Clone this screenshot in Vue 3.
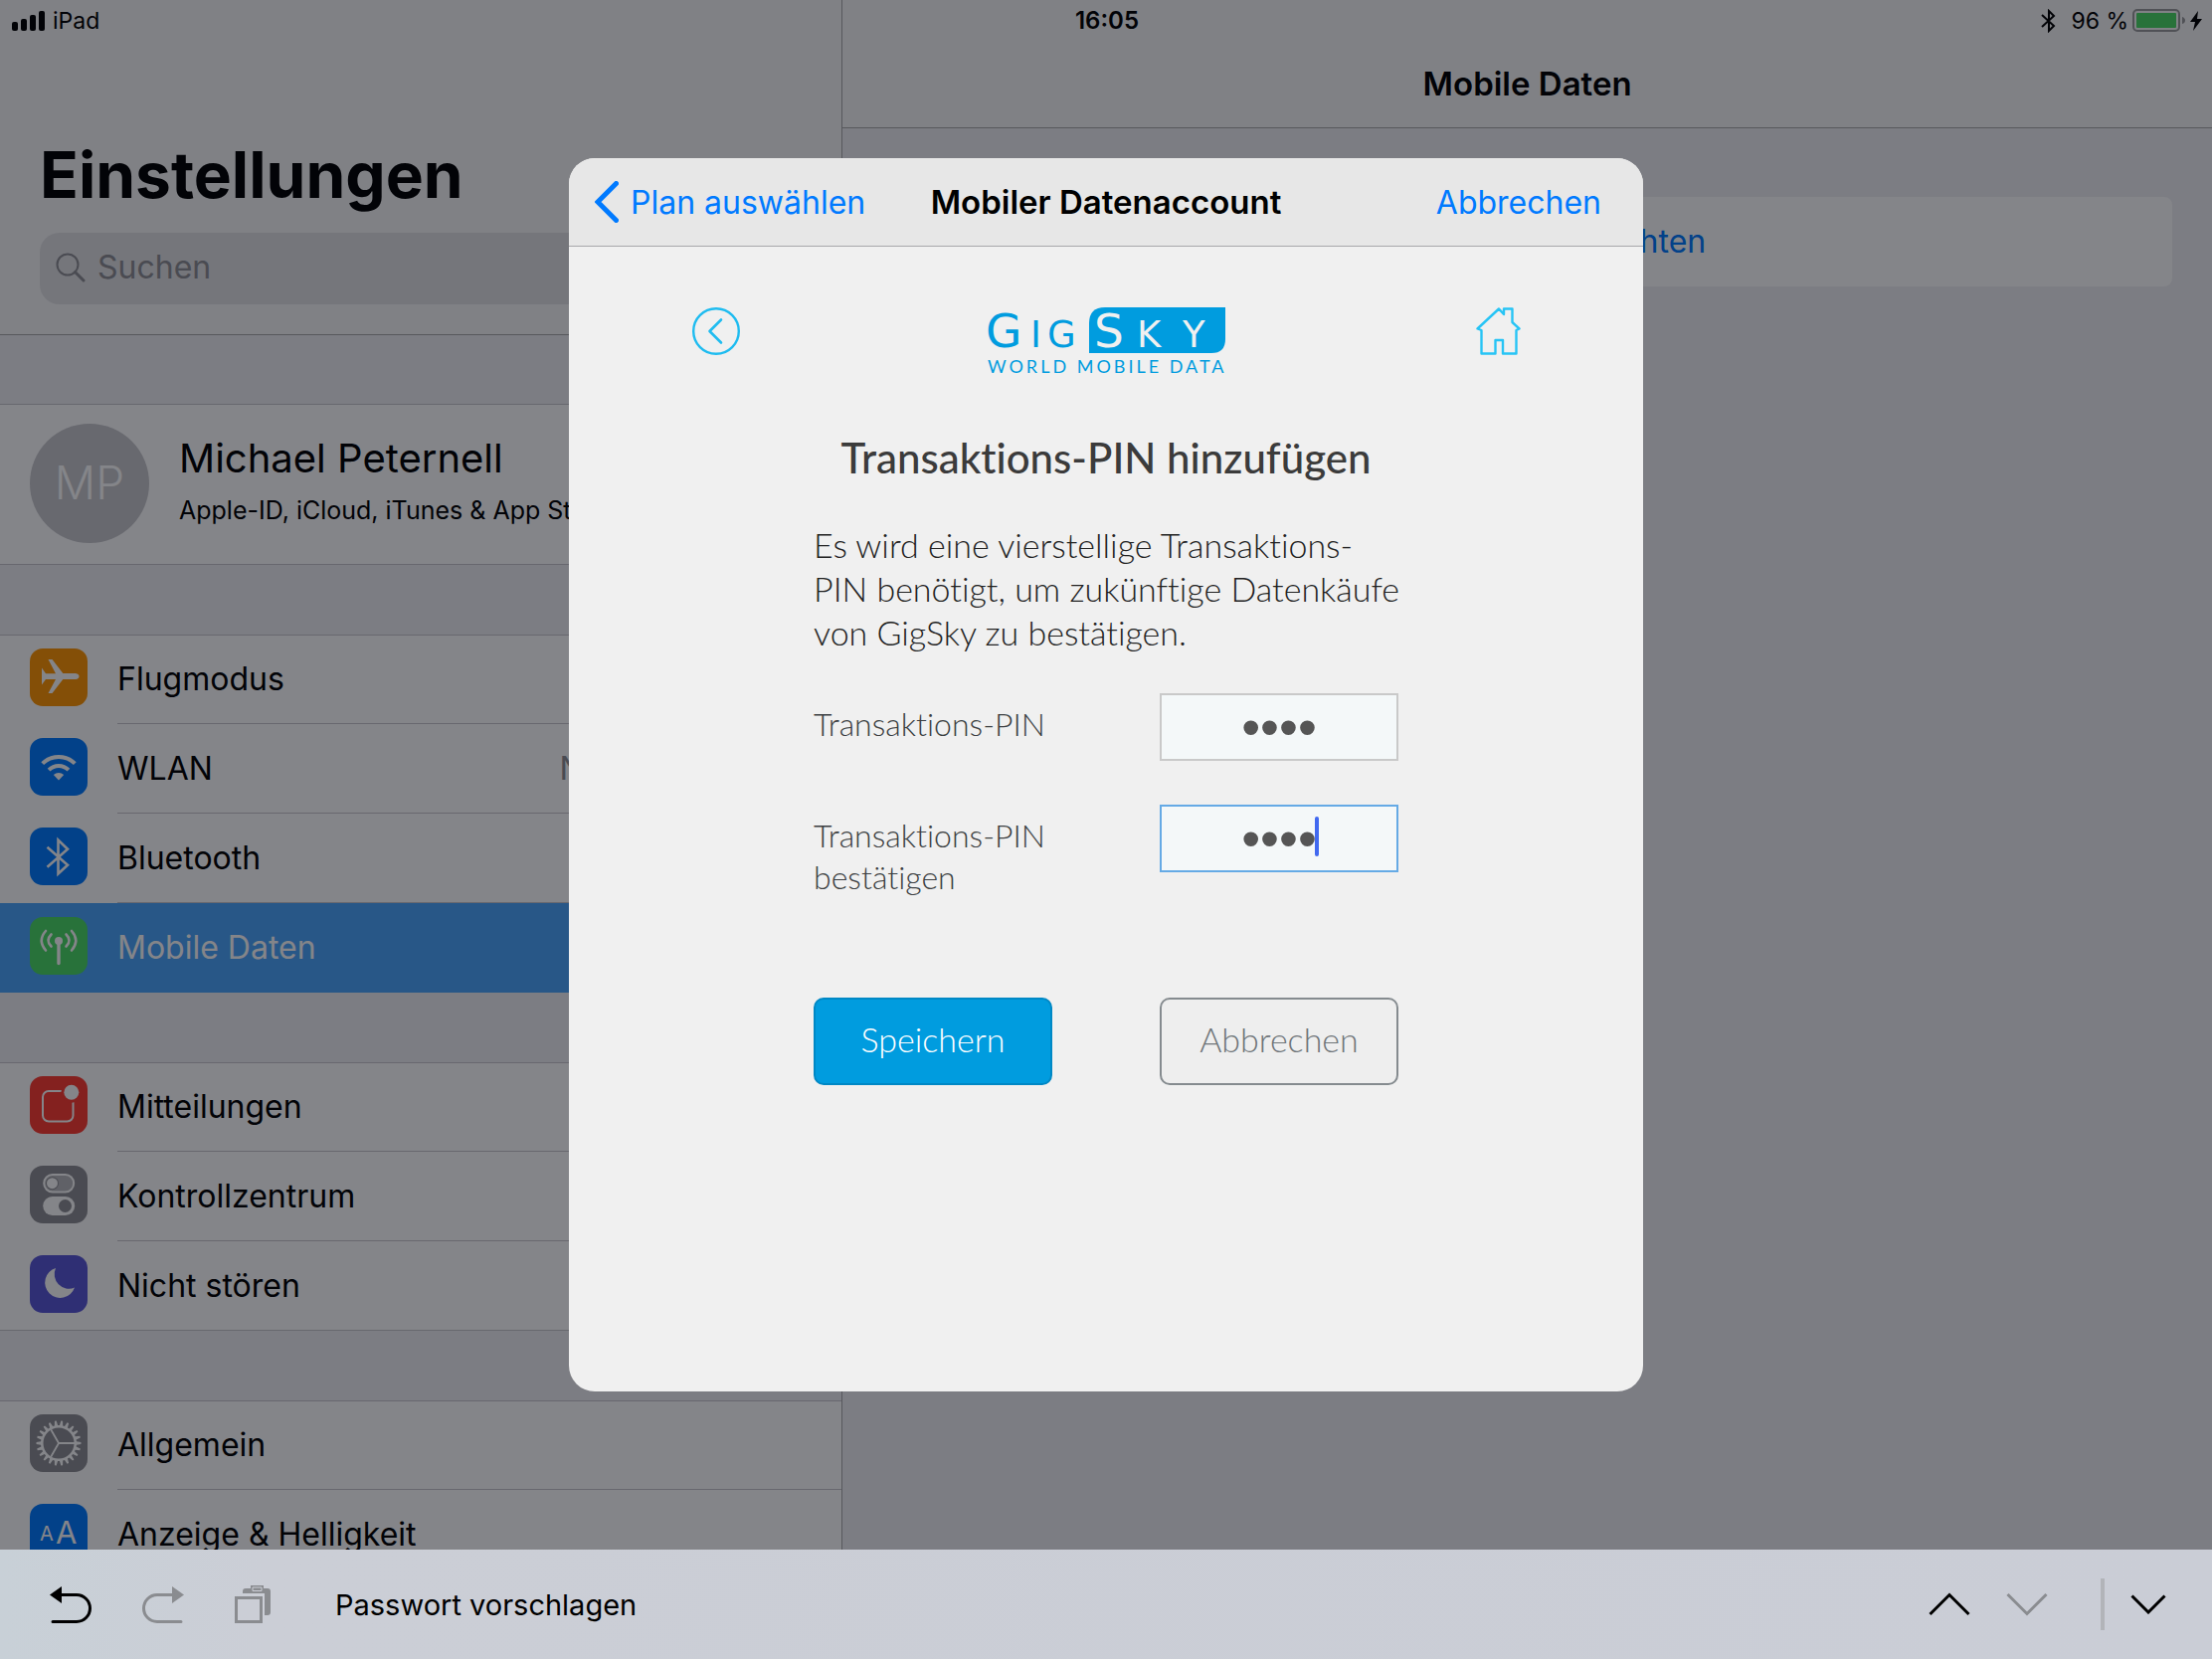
<template>
  <div class="screen">
    <div class="status-bar">
      <div class="status-left">
        <svg width="33" height="20" viewBox="0 0 33 20" aria-hidden="true">
          <rect x="0" y="11" width="6" height="9" rx="2" />
          <rect x="9" y="8" width="6" height="12" rx="2" />
          <rect x="18" y="4" width="6" height="16" rx="2" />
          <rect x="27" y="0" width="6" height="20" rx="2" />
        </svg>
        <span>iPad</span>
      </div>
      <div class="status-time">16:05</div>
      <div class="status-right">
        <svg width="16" height="24" viewBox="0 0 16 24" aria-hidden="true">
          <path d="M1 6 L13 17 L8 22 V2 L13 7 L1 18" fill="none" stroke="#000" stroke-width="2" />
        </svg>
        <span class="percent">96 %</span>
        <svg width="54" height="23" viewBox="0 0 54 23" aria-hidden="true">
          <rect x="1" y="1" width="46" height="21" rx="4" fill="none" stroke="#9a9a9c" stroke-width="2" />
          <rect x="4" y="4" width="40" height="15" rx="1" fill="#4cd964" />
          <path d="M50 8 Q53 9 53 11.5 Q53 14 50 15 Z" fill="#9a9a9c" />
        </svg>
        <svg width="12" height="20" viewBox="0 0 12 20" aria-hidden="true">
          <path d="M8 0 L0 11 H5 L3 20 L12 8 H7 Z" />
        </svg>
      </div>
    </div>

    <main class="content">
      <aside class="sidebar">
        <header class="sidebar-header">
          <h1>Einstellungen</h1>
          <div class="search">
            <svg width="30" height="30" viewBox="0 0 30 30" aria-hidden="true">
              <circle cx="12" cy="12" r="10.5" fill="none" stroke="#8e8e93" stroke-width="2" />
              <path d="M19.5 19.5 L28 28" stroke="#8e8e93" stroke-width="3" stroke-linecap="round" />
            </svg>
            <input v-model="search" type="search" placeholder="Suchen" aria-label="Suchen" />
          </div>
        </header>

        <section class="group profile">
          <div class="avatar">MP</div>
          <div>
            <div class="profile-name">Michael Peternell</div>
            <div class="profile-sub">Apple-ID, iCloud, iTunes &amp; App Store</div>
          </div>
        </section>

        <nav v-for="(group, index) in groups" :key="index" class="group">
          <a
            v-for="item in group"
            :key="item.icon"
            href="#"
            class="row"
            :class="{ active: item.icon === selected }"
            @click.prevent="selected = item.icon"
          >
            <svg class="row-icon" :class="item.icon" viewBox="0 0 58 58" aria-hidden="true">
              <path
                v-if="item.icon === 'flight'"
                d="M12 19.5 L16 25.3 H26 L18.5 11 H22.5 L33.3 25 H46 Q49.5 25.5 49.5 28 Q49.5 30.5 46 31 H33.3 L22.5 45 H18.5 L26 31 H16 L12 36.5 Z"
                fill="#fff"
              />
              <g v-else-if="item.icon === 'wifi'" fill="none" stroke="#fff" stroke-width="4">
                <path d="M12.7 25.7 A23 23 0 0 1 45.3 25.7" />
                <path d="M19.1 32.1 A14 14 0 0 1 38.9 32.1" />
                <path d="M29 42.5 L23.8 37 A8 8 0 0 1 34.2 37 Z" fill="#fff" stroke="none" />
              </g>
              <path
                v-else-if="item.icon === 'bluetooth'"
                d="M17.5 19.7 L38 37.7 L28.5 46.5 V12.5 L38 21.7 L17.5 39.7"
                fill="none"
                stroke="#fff"
                stroke-width="2.6"
              />
              <g v-else-if="item.icon === 'cellular'" fill="none" stroke="#fff" stroke-width="2.6" stroke-linecap="round">
                <path d="M29 24 V46.5" stroke-width="3.4" />
                <circle cx="29" cy="24" r="4" fill="#fff" stroke="none" />
                <path d="M16 14 Q7.5 23.5 16 33.5 M42 14 Q50.5 23.5 42 33.5" />
                <path d="M21.5 17.5 Q15.5 23.5 21.5 29.5 M36.5 17.5 Q42.5 23.5 36.5 29.5" />
              </g>
              <g v-else-if="item.icon === 'notifications'">
                <rect x="13" y="15" width="30.5" height="30.5" rx="6" fill="none" stroke="#fff" stroke-width="2" />
                <circle cx="41.8" cy="16.3" r="10.5" fill="#ff3b30" />
                <circle cx="41.8" cy="16.3" r="7.5" fill="#fff" />
              </g>
              <g v-else-if="item.icon === 'control'">
                <rect x="14.2" y="9" width="30" height="17.5" rx="8.7" fill="#b9b9bc" stroke="#fff" stroke-width="2" />
                <circle cx="22.5" cy="17.7" r="6.5" fill="#8e8e93" />
                <circle cx="22.5" cy="17.7" r="5.5" fill="#fff" />
                <rect x="13.2" y="31" width="32" height="19" rx="9.5" fill="#fff" />
                <circle cx="35.5" cy="40.5" r="6.5" fill="#8e8e93" />
              </g>
              <path
                v-else-if="item.icon === 'moon'"
                d="M26 13 A15.3 15.3 0 1 0 45 32.5 A14.6 14.6 0 0 1 26 13 Z"
                fill="#fff"
              />
              <g v-else-if="item.icon === 'general'" fill="none" stroke="#fff">
                <path :d="gear" fill="#fff" stroke="none" fill-rule="evenodd" />
                <path d="M29 29 H45 M29 29 L21 15 M29 29 L21 43" stroke-width="1.8" />
              </g>
              <g v-else fill="#fff">
                <text x="10" y="37" font-size="20">A</text>
                <text x="26" y="40" font-size="31">A</text>
              </g>
            </svg>
            <span class="row-body">
              <span>{{ item.label }}</span>
              <span v-if="item.value" class="row-value">{{ item.value }}</span>
            </span>
          </a>
        </nav>
      </aside>

      <section class="detail">
        <header class="detail-header">
          <h2>Mobile Daten</h2>
        </header>
        <button type="button" class="setup">Mobile Daten einrichten</button>
      </section>

      <div class="backdrop">
        <div class="modal" role="dialog" aria-labelledby="modal-title">
          <header class="modal-header">
            <button type="button" class="link back">
              <svg width="24" height="42" viewBox="0 0 24 42" aria-hidden="true">
                <path d="M21.5 2.5 L3 21 L21.5 39.5" fill="none" stroke="#007aff" stroke-width="5" stroke-linecap="round" />
              </svg>
              Plan auswählen
            </button>
            <h2 id="modal-title">Mobiler Datenaccount</h2>
            <button type="button" class="link cancel">Abbrechen</button>
          </header>

          <div class="brand">
            <button type="button" class="icon-button" aria-label="Zurück">
              <svg width="48" height="48" viewBox="0 0 48 48" fill="none" stroke="#1fbcf0" stroke-linecap="round">
                <circle cx="24" cy="24" r="22.8" stroke-width="2.4" />
                <path d="M29 12.5 L17.5 24 L29 35.5" stroke-width="2.6" stroke-linejoin="round" />
              </svg>
            </button>
            <svg class="logo" width="240" height="68" viewBox="0 0 240 68" role="img" aria-label="GigSky World Mobile Data">
              <path d="M102 46 V16 Q102 0 118 0 H239 V32 Q239 46 225 46 Z" fill="#009cdf" />
              <g font-family="DejaVu Sans, sans-serif" fill="#009cdf">
                <text x="-2 43 60" y="40"><tspan font-size="47">G</tspan><tspan font-size="37">IG</tspan></text>
                <text x="107 150 196" y="40" fill="#f0f0f0"><tspan font-size="47">S</tspan><tspan font-size="37">KY</tspan></text>
              </g>
              <text class="tagline" x="0" y="66">WORLD MOBILE DATA</text>
            </svg>
            <button type="button" class="icon-button" aria-label="Startseite">
              <svg width="48" height="48" viewBox="0 0 48 48">
                <path
                  d="M25 1.5 L30 7 V1.5 H38.5 V15 L45.5 21.5 L42.5 23 V46.5 H29 V33 H21.5 V46.5 H7.5 V23 L3.5 21.5 Z"
                  fill="none"
                  stroke="#27c4f5"
                  stroke-width="2.4"
                  stroke-linejoin="round"
                />
              </svg>
            </button>
          </div>

          <form class="pin-form" @submit.prevent>
            <h3>Transaktions-PIN hinzufügen</h3>
            <p>
              Es wird eine vierstellige Transaktions-<br />PIN benötigt, um zukünftige Datenkäufe<br />
              von GigSky zu bestätigen.
            </p>

            <div class="field">
              <label for="pin">Transaktions-PIN</label>
              <div class="pin-box">
                <input id="pin" v-model="pin" type="password" maxlength="4" />
              </div>
            </div>
            <div class="field">
              <label for="pin-confirm">Transaktions-PIN bestätigen</label>
              <div class="pin-box">
                <input id="pin-confirm" v-model="pinConfirm" class="focused" type="password" maxlength="4" />
                <span class="caret"></span>
              </div>
            </div>

            <div class="actions">
              <button type="submit" class="primary">Speichern</button>
              <button type="button" class="secondary">Abbrechen</button>
            </div>
          </form>
        </div>
      </div>
    </main>

    <footer class="keyboard-bar">
      <button type="button" aria-label="Widerrufen">
        <svg width="42" height="38" viewBox="0 0 42 38">
          <path d="M0 9.5 L12 1 V18 Z" />
          <path d="M11 9.5 H27 A13.5 13.5 0 0 1 27 36.5 H3" fill="none" stroke="#000" stroke-width="3" stroke-linecap="round" />
        </svg>
      </button>
      <button type="button" aria-label="Wiederholen">
        <svg width="42" height="38" viewBox="0 0 42 38">
          <path d="M42 9.5 L30 1 V18 Z" fill="#8a8c90" />
          <path d="M31 9.5 H15 A13.5 13.5 0 0 0 15 36.5 H39" fill="none" stroke="#8a8c90" stroke-width="3" stroke-linecap="round" />
        </svg>
      </button>
      <button type="button" aria-label="Einsetzen">
        <svg width="37" height="38" viewBox="0 0 37 38">
          <path d="M8 8 V6 Q8 3 11 3 H16 V0 H29 V3 H33 Q36 3 36 6 V27 Q36 30 33 30 H30 V8 Z" fill="#8a8c90" />
          <path d="M18 2 H27 V5.5 H18 Z" fill="none" stroke="#cbced6" stroke-width="1" />
          <rect x="1.5" y="12.5" width="25" height="24" fill="#cbced6" stroke="#8a8c90" stroke-width="3" />
        </svg>
      </button>
      <button type="button" class="suggest">Passwort vorschlagen</button>
      <div class="bar-right">
        <button type="button" aria-label="Vorheriges Feld">
          <svg width="42" height="24" viewBox="0 0 42 24">
            <path d="M1.5 22 L21 2.5 L40.5 22" fill="none" stroke="#000" stroke-width="3" />
          </svg>
        </button>
        <button type="button" aria-label="Nächstes Feld">
          <svg width="42" height="24" viewBox="0 0 42 24">
            <path d="M1.5 2 L21 21.5 L40.5 2" fill="none" stroke="#8a8c90" stroke-width="3" />
          </svg>
        </button>
        <span class="bar-divider"></span>
        <button type="button" aria-label="Tastatur ausblenden">
          <svg width="36" height="20" viewBox="0 0 36 20">
            <path d="M1.5 1.5 L18 18 L34.5 1.5" fill="none" stroke="#000" stroke-width="3" />
          </svg>
        </button>
      </div>
    </footer>
  </div>
</template>

<script setup>
import { ref } from 'vue';

const search = ref('');
const pin = ref('1234');
const pinConfirm = ref('1234');
const selected = ref('cellular');

const groups = [
  [
    { icon: 'flight', label: 'Flugmodus' },
    { icon: 'wifi', label: 'WLAN', value: 'Nicht verbunden' },
    { icon: 'bluetooth', label: 'Bluetooth' },
    { icon: 'cellular', label: 'Mobile Daten' },
  ],
  [
    { icon: 'notifications', label: 'Mitteilungen' },
    { icon: 'control', label: 'Kontrollzentrum' },
    { icon: 'moon', label: 'Nicht stören' },
  ],
  [
    { icon: 'general', label: 'Allgemein' },
    { icon: 'display', label: 'Anzeige & Helligkeit' },
  ],
];

// toothed ring with a round hole in the middle
const gearPath = (teeth) => {
  const step = (Math.PI * 2) / teeth;
  const point = (r, a) => `${(29 + r * Math.cos(a)).toFixed(2)} ${(29 + r * Math.sin(a)).toFixed(2)}`;
  const points = [];
  for (let i = 0; i < teeth; i++) {
    const a = i * step;
    points.push(point(18, a - step * 0.32), point(22.5, a - step * 0.14));
    points.push(point(22.5, a + step * 0.14), point(18, a + step * 0.32));
  }
  return `M${points.join(' L')} Z M44.5 29 A15.5 15.5 0 1 0 13.5 29 A15.5 15.5 0 1 0 44.5 29 Z`;
};
const gear = gearPath(22);
</script>

<style>
html,
body {
  margin: 0;
  overflow: hidden;
}
</style>

<style scoped>
.screen {
  position: relative;
  display: flex;
  flex-direction: column;
  height: 100vh;
  overflow: hidden;
  font-family: Inter, 'Liberation Sans', sans-serif;
  font-size: 32px;
  color: #000;
  background: #efeff4;
}
h1,
h2,
h3,
p {
  margin: 0;
}
button {
  padding: 0;
  border: none;
  background: none;
  font: inherit;
  color: inherit;
  cursor: pointer;
}
svg {
  display: block;
  flex: none;
}

/* status bar lies over both headers */
.status-bar {
  position: absolute;
  top: 0;
  left: 0;
  right: 0;
  z-index: 1;
  display: grid;
  grid-template-columns: 1fr auto 1fr;
  align-items: center;
  height: 41px;
  padding: 0 10px 0 12px;
  font-size: 23px;
}
.status-left,
.status-right {
  display: flex;
  align-items: center;
  gap: 8px;
}
.status-right {
  justify-content: flex-end;
  gap: 4px;
}
.status-time {
  font-size: 24px;
  font-weight: 600;
}
.percent {
  margin-left: 10px;
}

.content {
  position: relative;
  flex: 1;
  min-height: 0;
  display: grid;
  grid-template-columns: 8fr 13fr;
  overflow: hidden;
}
.sidebar {
  min-width: 0;
  border-right: 1px solid #a7a7aa;
}
.sidebar-header {
  box-sizing: border-box;
  height: 337px;
  margin-bottom: 69px;
  padding: 136px 40px 0;
  background: #f7f7f7;
  border-bottom: 1px solid #a7a7aa;
}
h1 {
  font-size: 64px;
  line-height: 80px;
  font-weight: 700;
}
.search {
  box-sizing: border-box;
  display: flex;
  align-items: center;
  gap: 12px;
  height: 72px;
  margin-top: 18px;
  padding: 0 16px 3px;
  border-radius: 20px;
  background: #e1e1e3;
}
.search input {
  flex: 1;
  min-width: 0;
  padding: 0;
  border: none;
  outline: none;
  background: none;
  font: inherit;
}
.search input::placeholder {
  color: #8e8e93;
  opacity: 1;
}

.group {
  margin-bottom: 70px;
  background: #fff;
  box-shadow: inset 0 1px 0 #c8c7cc, inset 0 -1px 0 #c8c7cc;
}
.profile {
  display: flex;
  gap: 30px;
  height: 162px;
  box-sizing: border-box;
  padding: 20px 30px;
  white-space: nowrap;
}
.avatar {
  flex: none;
  width: 120px;
  height: 120px;
  border-radius: 50%;
  background: #c8c8cc;
  color: #fff;
  font-size: 46px;
  font-weight: 300;
  line-height: 118px;
  text-align: center;
}
.profile-name {
  margin-top: 7px;
  font-size: 40px;
  line-height: 56px;
}
.profile-sub {
  margin-top: 4px;
  font-size: 25px;
  line-height: 40px;
}
.row {
  display: flex;
  height: 90px;
  padding-left: 30px;
  color: #000;
  text-decoration: none;
}
.row-icon {
  width: 58px;
  height: 58px;
  margin: 14px 30px 0 0;
  border-radius: 13px;
}
.row-body {
  flex: 1;
  display: flex;
  align-items: center;
  justify-content: space-between;
  padding-right: 32px;
  border-bottom: 1px solid #c8c7cc;
}
.row:last-child .row-body {
  border-bottom-color: transparent;
}
.row-value {
  color: #8e8e93;
}
.row.active {
  background: #4ca5fb;
  color: #fff;
}
.flight {
  background: #ff9500;
}
.wifi,
.bluetooth,
.display {
  background: #007aff;
}
.cellular {
  background: #4cd964;
}
.notifications {
  background: #ff3b30;
}
.control,
.general {
  background: #8e8e93;
}
.moon {
  background: #5856d6;
}

.detail {
  min-width: 0;
}
.detail-header {
  box-sizing: border-box;
  height: 129px;
  padding-top: 62px;
  background: #f7f7f7;
  border-bottom: 1px solid #a7a7aa;
}
h2 {
  font-size: 33px;
  line-height: 44px;
  font-weight: 600;
  text-align: center;
}
.setup {
  display: block;
  width: calc(100% - 80px);
  height: 90px;
  margin: 69px 40px 0;
  padding-bottom: 2px;
  border-radius: 8px;
  background: #fff;
  color: #007aff;
}

.backdrop {
  position: absolute;
  inset: 0;
  z-index: 2;
  display: grid;
  place-items: center;
  background: rgba(4, 6, 14, 0.49);
}
.modal {
  width: min(1080px, 90%);
  min-height: 1240px;
  border-radius: 26px;
  background: #f0f0f0;
  overflow: hidden;
}
.modal-header {
  display: grid;
  grid-template-columns: 1fr auto 1fr;
  align-items: center;
  height: 88px;
  padding: 0 42px 0 26px;
  background: #e7e7e7;
  border-bottom: 1px solid #a7a7aa;
}
.modal-header h2 {
  padding-left: 16px;
}
.link {
  color: #007aff;
}
.back {
  display: flex;
  align-items: center;
  gap: 12px;
}
.cancel {
  justify-self: end;
}
.brand {
  display: flex;
  justify-content: space-between;
  align-items: flex-start;
  margin: 61px 122px 0 124px;
}
.logo {
  overflow: visible;
}
.tagline {
  font-family: Lato, sans-serif;
  font-size: 18px;
  letter-spacing: 3px;
  fill: #009cdf;
}

.pin-form {
  width: 588px;
  max-width: 100%;
  margin: 53px auto 0;
  font-family: Lato, 'Open Sans', sans-serif;
  font-weight: 300;
  font-variant-ligatures: none;
}
h3 {
  font-size: 42px;
  line-height: 60px;
  font-weight: 500;
  color: #3b3b3b;
  text-align: center;
}
p {
  margin: 36px -12px 39px 0;
  font-size: 34px;
  line-height: 44px;
  color: #222;
}
.field {
  display: flex;
  justify-content: space-between;
  align-items: flex-start;
  height: 112px;
}
.field label {
  width: 240px;
  margin-top: 10px;
  font-size: 32px;
  line-height: 42px;
  color: #3c3f42;
}
.pin-box {
  position: relative;
  width: 240px;
}
.pin-box input {
  box-sizing: border-box;
  display: block;
  width: 100%;
  height: 68px;
  padding: 0;
  border: 2px solid #c9c9c9;
  border-radius: 0;
  outline: none;
  background: #f4f8f9;
  color: #555;
  font-family: 'Liberation Sans', sans-serif;
  font-size: 54px;
  text-align: center;
}
.pin-box input.focused {
  border-color: #65aae5;
}
.caret {
  position: absolute;
  top: 12px;
  left: calc(50% + 36px);
  width: 4px;
  height: 40px;
  border-radius: 2px;
  background: #4169f0;
}
.actions {
  display: flex;
  justify-content: space-between;
  margin-top: 82px;
}
.actions button {
  box-sizing: border-box;
  width: 240px;
  height: 88px;
  padding-bottom: 6px;
  border: 2px solid #858b8f;
  border-radius: 10px;
  font-size: 34px;
  color: #6f7579;
  background: #eee;
}
.actions .primary {
  border-color: #0088c5;
  background: #009cdf;
  color: #fff;
}

.keyboard-bar {
  position: relative;
  z-index: 3;
  display: flex;
  align-items: center;
  gap: 51px;
  height: 110px;
  padding: 0 46px 0 50px;
  background: linear-gradient(90deg, #c8d0d7, #cbced6 12%, #cacdd6);
}
.suggest {
  margin-left: 13px;
  font-size: 29px;
}
.bar-right {
  display: flex;
  align-items: center;
  gap: 36px;
  margin-left: auto;
}
.bar-divider {
  width: 4px;
  height: 52px;
  margin-left: 17px;
  margin-right: -10px;
  background: #b2b4b9;
}
</style>
